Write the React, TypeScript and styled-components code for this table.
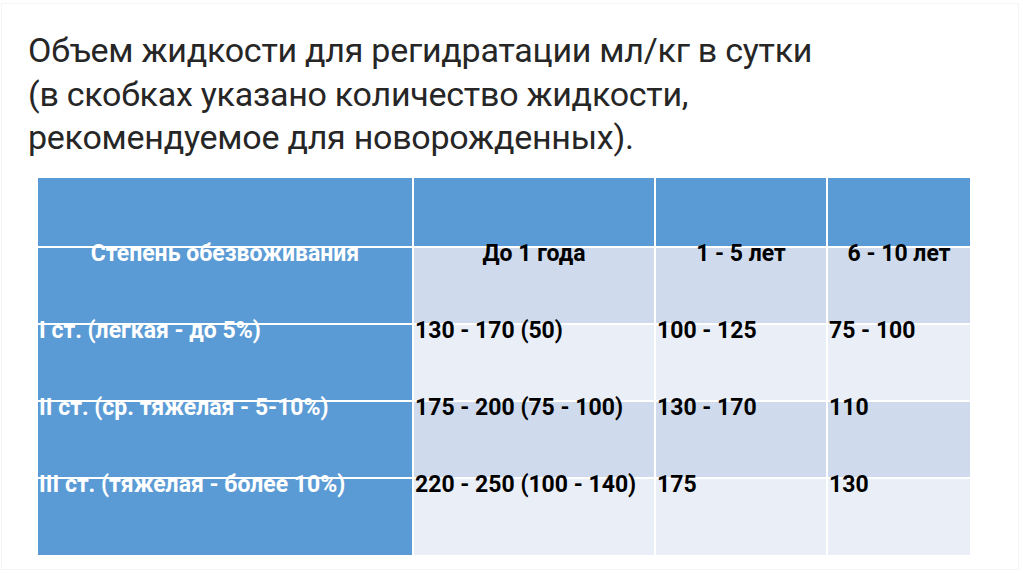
import React from 'react';
import styled, { createGlobalStyle } from 'styled-components';

type Tone = 'accent' | 'band' | 'plain';

const header = ['Степень обезвоживания', 'До 1 года', '1 - 5 лет', '6 - 10 лет'];

const rows = [
  ['I ст. (легкая - до 5%)', '130 - 170 (50)', '100 - 125', '75 - 100'],
  ['II ст. (ср. тяжелая - 5-10%)', '175 - 200 (75 - 100)', '130 - 170', '110'],
  ['III ст. (тяжелая - более 10%)', '220 - 250 (100 - 140)', '175', '130'],
];

const App: React.FC = () => {
  return (
    <>
      <GlobalStyle />
      <Slide>
        <Title>
          Объем жидкости для регидратации мл/кг в сутки
          <br />
          (в скобках указано количество жидкости,
          <br />
          рекомендуемое для новорожденных).
        </Title>

        <Table>
          {/* top band of the table is empty */}
          {header.map((_, i) => (
            <Cell key={`top-${i}`} $tone="accent" />
          ))}

          {header.map((text, i) => (
            <Cell key={`head-${i}`} $tone={i === 0 ? 'accent' : 'band'} $center>
              <CellText $light={i === 0}>{text}</CellText>
            </Cell>
          ))}

          {rows.map((row, r) =>
            row.map((text, i) => (
              <Cell key={`${r}-${i}`} $tone={i === 0 ? 'accent' : r % 2 === 0 ? 'plain' : 'band'}>
                <CellText $light={i === 0}>{text}</CellText>
              </Cell>
            ))
          )}
        </Table>
      </Slide>
    </>
  );
};

const GlobalStyle = createGlobalStyle`
  html, body {
    margin: 0;
    padding: 0;
    background: #ffffff;
  }
  * {
    box-sizing: border-box;
  }
`;

const Slide = styled.div`
  width: 1018px;
  height: 567px;
  margin: 3px 0 0 1px;
  border: 1px solid #f4f4f4;
  padding: 25px 0 0 26px;
  font-family: Roboto, 'Liberation Sans', sans-serif;
`;

const Title = styled.h1`
  margin: 0;
  font-size: 34px;
  font-weight: 400;
  line-height: 43.5px;
  color: #262626;
  letter-spacing: -0.25px;
`;

const Table = styled.div`
  display: grid;
  grid-template-columns: 374px 240px 170px 142px;
  grid-template-rows: 68px 75px 75px 75px 76px;
  gap: 2px;
  margin: 18px 0 0 10px;
  width: 932px;
`;

const toneColors: Record<Tone, string> = {
  accent: '#5b9bd5',
  band: '#cfdbec',
  plain: '#e9eef7',
};

const Cell = styled.div<{ $tone: Tone; $center?: boolean }>`
  background: ${(p) => toneColors[p.$tone]};
  text-align: ${(p) => (p.$center ? 'center' : 'left')};
  padding: 0 1px;
`;

const CellText = styled.span<{ $light?: boolean }>`
  display: block;
  margin-top: -8px;
  font-size: 23px;
  font-weight: 700;
  line-height: 28px;
  white-space: nowrap;
  color: ${(p) => (p.$light ? '#ffffff' : '#000000')};
`;

export default App;
